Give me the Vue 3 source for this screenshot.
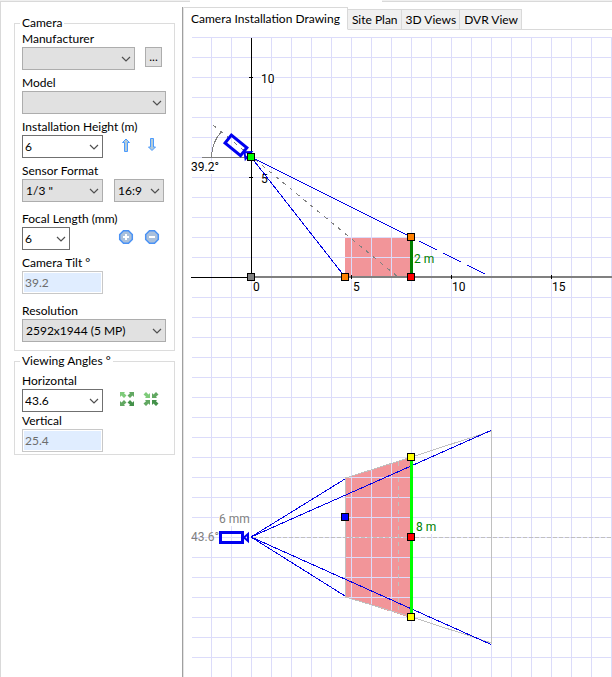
<script setup>
import { ref } from 'vue'

const tabs = ['Camera Installation Drawing', 'Site Plan', '3D Views', 'DVR View']
const activeTab = ref(tabs[0])

const dashes = [
  [228, 204, 246, 213],
  [252, 216, 270, 225],
  [276, 228, 294, 237],
]

const handles = [
  { x: 60, y: 120, fill: '#00ff00' },
  { x: 60, y: 240, fill: '#808080' },
  { x: 154, y: 240, fill: '#ff8000' },
  { x: 220, y: 200, fill: '#ff8000' },
  { x: 220, y: 240, fill: '#ff0000' },
  { x: 220, y: 420, fill: '#ffff00' },
  { x: 220, y: 500, fill: '#ff0000' },
  { x: 220, y: 580, fill: '#ffff00' },
  { x: 154, y: 480, fill: '#0000ff' },
]

const axisLabels = [
  { x: 62, text: '0' },
  { x: 162, text: '5' },
  { x: 261, text: '10' },
  { x: 361, text: '15' },
]

const leaf = 'M0 0H5L4 1.200L6.500 3.600L4 6L1.500 3.400L0 5Z'
</script>

<template>
  <div class="window">
    <div class="strip"><span class="strip-left"></span><span class="strip-right"></span></div>
    <div class="body">
      <form class="sidebar" @submit.prevent>
        <fieldset class="group">
          <legend>Camera</legend>
          <div class="field">
            <label for="manufacturer">Manufacturer</label>
            <div class="row">
              <span class="combo w-maker">
                <select id="manufacturer"><option></option></select>
                <svg class="chevron" viewBox="0 0 10 6"><path d="M1 1l4 4 4-4" /></svg>
              </span>
              <button type="button" class="more">...</button>
            </div>
          </div>
          <div class="field">
            <label for="model">Model</label>
            <span class="combo w-full">
              <select id="model"><option></option></select>
              <svg class="chevron" viewBox="0 0 10 6"><path d="M1 1l4 4 4-4" /></svg>
            </span>
          </div>
          <div class="field">
            <label for="height">Installation Height (m)</label>
            <div class="row">
              <span class="combo editable w-mid">
                <select id="height"><option>6</option></select>
                <svg class="chevron" viewBox="0 0 10 6"><path d="M1 1l4 4 4-4" /></svg>
              </span>
              <span class="tools">
                <button type="button" class="tool" aria-label="Raise camera">
                  <svg width="16" height="16" viewBox="0 0 16 16"><path class="arrow" d="M8 2L11.5 5.5H9.500V14.5H6.500V5.5H4.5Z" /></svg>
                </button>
                <button type="button" class="tool" aria-label="Lower camera">
                  <svg width="16" height="16" viewBox="0 0 16 16"><path class="arrow" d="M8 13.500L11.5 10H9.500V1.500H6.500V10H4.5Z" /></svg>
                </button>
              </span>
            </div>
          </div>
          <div class="field">
            <label for="sensor">Sensor Format</label>
            <div class="row">
              <span class="combo w-mid">
                <select id="sensor"><option>1/3 "</option></select>
                <svg class="chevron" viewBox="0 0 10 6"><path d="M1 1l4 4 4-4" /></svg>
              </span>
              <span class="combo w-aspect">
                <select aria-label="Aspect ratio"><option>16:9</option></select>
                <svg class="chevron" viewBox="0 0 10 6"><path d="M1 1l4 4 4-4" /></svg>
              </span>
            </div>
          </div>
          <div class="field spaced">
            <label for="focal">Focal Length (mm)</label>
            <div class="row">
              <span class="combo editable w-small">
                <select id="focal"><option>6</option></select>
                <svg class="chevron" viewBox="0 0 10 6"><path d="M1 1l4 4 4-4" /></svg>
              </span>
              <span class="tools">
                <button type="button" class="tool" aria-label="Increase focal length">
                  <svg width="16" height="16" viewBox="0 0 16 16">
                    <path class="disc" d="M5.5 1.7h5l3.8 3.8v5l-3.8 3.8h-5l-3.8-3.8v-5z" />
                    <path class="sign" d="M8 5v6M5 8h6" />
                  </svg>
                </button>
                <button type="button" class="tool" aria-label="Decrease focal length">
                  <svg width="16" height="16" viewBox="0 0 16 16">
                    <path class="disc" d="M5.5 1.7h5l3.8 3.8v5l-3.8 3.8h-5l-3.8-3.8v-5z" />
                    <path class="sign" d="M5 8h6" />
                  </svg>
                </button>
              </span>
            </div>
          </div>
          <div class="field">
            <label for="tilt">Camera Tilt °</label>
            <input id="tilt" class="readout w-mid" type="text" value="39.2" disabled />
          </div>
          <div class="field spaced">
            <label for="resolution">Resolution</label>
            <span class="combo w-full">
              <select id="resolution"><option>2592x1944 (5 MP)</option></select>
              <svg class="chevron" viewBox="0 0 10 6"><path d="M1 1l4 4 4-4" /></svg>
            </span>
          </div>
        </fieldset>

        <fieldset class="group angles">
          <legend>Viewing Angles °</legend>
          <div class="field">
            <label for="horizontal">Horizontal</label>
            <div class="row">
              <span class="combo editable w-mid">
                <select id="horizontal"><option>43.6</option></select>
                <svg class="chevron" viewBox="0 0 10 6"><path d="M1 1l4 4 4-4" /></svg>
              </span>
              <span class="tools angle-tools">
                <button type="button" class="tool" aria-label="Widen angle">
                  <svg width="16" height="16" viewBox="0 0 16 16">
                    <path class="leaf light" :d="leaf" transform="translate(1 1)" />
                    <path class="leaf mid" :d="leaf" transform="translate(15 1) scale(-1 1)" />
                    <path class="leaf mid" :d="leaf" transform="translate(1 15) scale(1 -1)" />
                    <path class="leaf dark" :d="leaf" transform="translate(15 15) scale(-1 -1)" />
                  </svg>
                </button>
                <button type="button" class="tool" aria-label="Narrow angle">
                  <svg width="16" height="16" viewBox="0 0 16 16">
                    <path class="leaf light" :d="leaf" transform="translate(7 7) scale(-1 -1)" />
                    <path class="leaf mid" :d="leaf" transform="translate(9 7) scale(1 -1)" />
                    <path class="leaf mid" :d="leaf" transform="translate(7 9) scale(-1 1)" />
                    <path class="leaf dark" :d="leaf" transform="translate(9 9)" />
                  </svg>
                </button>
              </span>
            </div>
          </div>
          <div class="field tight">
            <label for="vertical">Vertical</label>
            <input id="vertical" class="readout w-mid" type="text" value="25.4" disabled />
          </div>
        </fieldset>
      </form>

      <main class="workspace">
        <div class="tabs" role="tablist">
          <button
            v-for="tab in tabs"
            :key="tab"
            type="button"
            role="tab"
            class="tab"
            :class="{ active: tab === activeTab }"
            :aria-selected="tab === activeTab"
            @click="activeTab = tab"
          >{{ tab }}</button>
        </div>

        <div class="page">
          <svg class="drawing" role="img" aria-label="Camera installation drawing">
            <defs>
              <pattern id="grid" width="20" height="20" patternUnits="userSpaceOnUse">
                <path d="M0 0H20V1H1V20H0Z" fill="#dcdcfa" />
              </pattern>
            </defs>

            <g fill="#f29599" shape-rendering="crispEdges">
              <rect x="154" y="201" width="67" height="39" />
              <path d="M154 441L220 420V581L154 560Z" />
            </g>
            <rect width="100%" height="100%" fill="url(#grid)" />
            <rect width="1" height="100%" fill="#fff" />

            <g fill="#fff">
              <rect x="70" y="34" width="14" height="13" />
              <rect x="0" y="124" width="27" height="13" />
              <rect x="226" y="483" width="18" height="14" />
              <rect x="28" y="475" width="27" height="14" />
            </g>

            <g class="label">
              <text x="70" y="46">10</text>
              <text x="70" y="146">5</text>
              <text v-for="l in axisLabels" :key="l.text" :x="l.x" y="254">{{ l.text }}</text>
              <text x="0" y="134">39.2°</text>
              <text class="green" x="223" y="226">2 m</text>
              <text class="green" x="225" y="494">8 m</text>
              <text class="gray" x="28" y="486">6 mm</text>
              <text class="gray" x="0" y="504">43.6°</text>
            </g>

            <g shape-rendering="crispEdges" fill="none">
              <path stroke="#000" d="M60.5 1V240M58 40.500h4M58 140.500h4M0 240.500H60" />
              <path stroke="#808080" stroke-width="2" d="M60 240H1000" />
              <path stroke="#000" d="M160.500 238v4M260.500 238v4M360.500 238v4" />
              <path stroke="#808080" d="M11 120.500H57M20.500 120A40 40 0 0 1 30 95" />
              <path stroke="#808080" stroke-dasharray="4 5" d="M22 88L207 240" />
              <path stroke="#0000e6" d="M154 240L60 120L220 200" />
              <line v-for="d in dashes" :key="d[0]" stroke="#0000e6" :x1="d[0]" :y1="d[1]" :x2="d[2]" :y2="d[3]" />
              <path stroke="#008000" stroke-width="3" d="M220.500 201V240" />

              <path stroke="#c0c0c0" d="M300.500 394L220.500 420L154.500 441V560L220.500 580L300.500 606V393" />
              <path stroke="#c0c0c0" stroke-dasharray="4 4" d="M207.500 425V577" />
              <path stroke="#c0c0c0" stroke-dasharray="4 2" d="M62 500.500H1000" />
              <path stroke="#0000e6" d="M154 442L60 500L300 393.500M154 559L60 500L300 607.500" />
              <path stroke="#00ff00" stroke-width="3" d="M220.500 421V580" />
            </g>

            <g stroke="#0000f0" fill="none">
              <g transform="translate(60 120) rotate(39.200)">
                <rect x="-29" y="-4.500" width="20" height="10" stroke-width="3" />
                <path d="M-8 0.500L-3 -4V5Z" stroke-width="2" />
              </g>
              <g transform="translate(60 500)">
                <rect x="-30.500" y="-4.500" width="22" height="10" stroke-width="3" />
                <path d="M-7 0.500L-3 -3V4Z" stroke-width="2" />
              </g>
            </g>

            <g stroke="#000" shape-rendering="crispEdges">
              <rect v-for="h in handles" :key="h.x + '-' + h.y" :x="h.x - 3.5" :y="h.y - 3.5" width="7" height="7" :fill="h.fill" />
            </g>
          </svg>
        </div>
      </main>
    </div>
  </div>
</template>

<style>
body {
  margin: 0;
  background: #fff;
}
</style>

<style scoped>
.window {
  display: flex;
  flex-direction: column;
  min-height: 100vh;
  font-family: Lato, "Open Sans", sans-serif;
  font-size: 12px;
  line-height: 16px;
  color: #000;
}

.strip {
  display: flex;
  justify-content: space-between;
  height: 2px;
}

.strip span {
  box-sizing: border-box;
  background: #f0f0f0;
  border-bottom: 1px solid #d9d9d9;
}

.strip-left {
  flex: 0 0 190px;
}

.strip-right {
  flex: 0 0 230px;
}

.body {
  display: flex;
  flex: 1;
  border-left: 1px solid #d9d9d9;
}

.sidebar {
  flex: none;
  box-sizing: border-box;
  width: 181px;
  padding: 13px 7px 0 13px;
}

.group {
  margin: 0 0 2px;
  padding: 0 7px 8px;
  border: 1px solid #dcdcdc;
  min-width: 0;
}

.group.angles {
  padding-top: 4px;
  padding-bottom: 2px;
}

legend {
  margin-left: -2px;
  padding: 0 2px;
  height: 16px;
}

.field {
  display: flex;
  flex-direction: column;
  align-items: flex-start;
}

.field + .field {
  margin-top: 5px;
}

.field + .field.spaced {
  margin-top: 9px;
}

.field + .field.tight {
  margin-top: 1px;
}

label {
  white-space: nowrap;
}

.row {
  display: flex;
  align-items: flex-start;
  gap: 11px;
  width: 144px;
}

.combo {
  display: grid;
  grid-template-columns: 1fr 14px;
  align-items: center;
}

.w-maker { width: 113px; }
.w-full { width: 144px; }
.w-mid { width: 81px; }
.w-aspect { width: 50px; }
.w-small { width: 48px; }

select {
  grid-area: 1 / 1 / 2 / 3;
  appearance: none;
  box-sizing: border-box;
  width: 100%;
  height: 23px;
  margin: 0;
  padding: 0 3px;
  border: 1px solid #adadad;
  border-radius: 0;
  background: #e1e1e1;
  color: #000;
  font: inherit;
}

.editable select {
  padding: 0 2px;
  border-color: #707070;
  background: #fff;
}

.chevron {
  grid-area: 1 / 2 / 2 / 3;
  z-index: 1;
  width: 10px;
  height: 6px;
  fill: none;
  stroke: #505050;
  stroke-width: 1.2;
  pointer-events: none;
}

.more {
  box-sizing: border-box;
  width: 17px;
  height: 20px;
  margin-left: -1px;
  padding: 0;
  border: 1px solid #adadad;
  background: #e1e1e1;
  color: #000;
  font: inherit;
  line-height: 16px;
}

.tools {
  display: flex;
  gap: 10px;
  margin-left: auto;
  padding: 2px 6px 0 0;
}

.angle-tools {
  gap: 8px;
  padding-right: 7px;
}

.tool {
  display: block;
  width: 16px;
  height: 16px;
  padding: 0;
  border: 0;
  background: none;
}

.tool svg {
  display: block;
}

.arrow {
  fill: #b4cbd8;
  stroke: #4a9bff;
}

.disc {
  fill: #a9c0dc;
  stroke: #4a92f5;
  stroke-width: 1.5;
}

.sign {
  fill: none;
  stroke: #fff;
  stroke-width: 2;
}

.leaf.light { fill: #7ecb7a; }
.leaf.mid { fill: #62a862; }
.leaf.dark { fill: #44914a; }

.readout {
  box-sizing: border-box;
  height: 23px;
  margin: 0;
  padding: 0 2px;
  border: 1px solid #c8c8c8;
  box-shadow: inset 0 0 0 1px #fff;
  background: #e0edff;
  color: #6d6d6d;
  font: inherit;
}

.workspace {
  display: flex;
  flex: 1;
  flex-direction: column;
  min-width: 0;
  margin-top: 5px;
  border-left: 1px solid #a0a0a0;
}

.tabs {
  display: flex;
  align-items: flex-end;
  height: 23px;
  box-sizing: border-box;
  border-left: 1px solid #e3e3e3;
  box-shadow: inset 0 -1px #d9d9d9;
}

.tab {
  box-sizing: border-box;
  height: 21px;
  padding: 0 3px 0 4px;
  border: 1px solid #d9d9d9;
  border-left: 0;
  background: #f0f0f0;
  color: #000;
  font: inherit;
  white-space: nowrap;
}

.tab.active {
  height: 23px;
  padding: 0 7px;
  border-bottom-color: #fff;
  background: #fff;
}

.page {
  flex: 1;
  padding: 7px 0 0 7px;
  border-left: 1px solid #e3e3e3;
}

.drawing {
  display: block;
  width: 100%;
  height: 640px;
  overflow: hidden;
}

.label {
  font-family: Roboto, "Liberation Sans", sans-serif;
  font-size: 12px;
  fill: #000;
}

.label .green { fill: #008000; }
.label .gray { fill: #808080; }
</style>
